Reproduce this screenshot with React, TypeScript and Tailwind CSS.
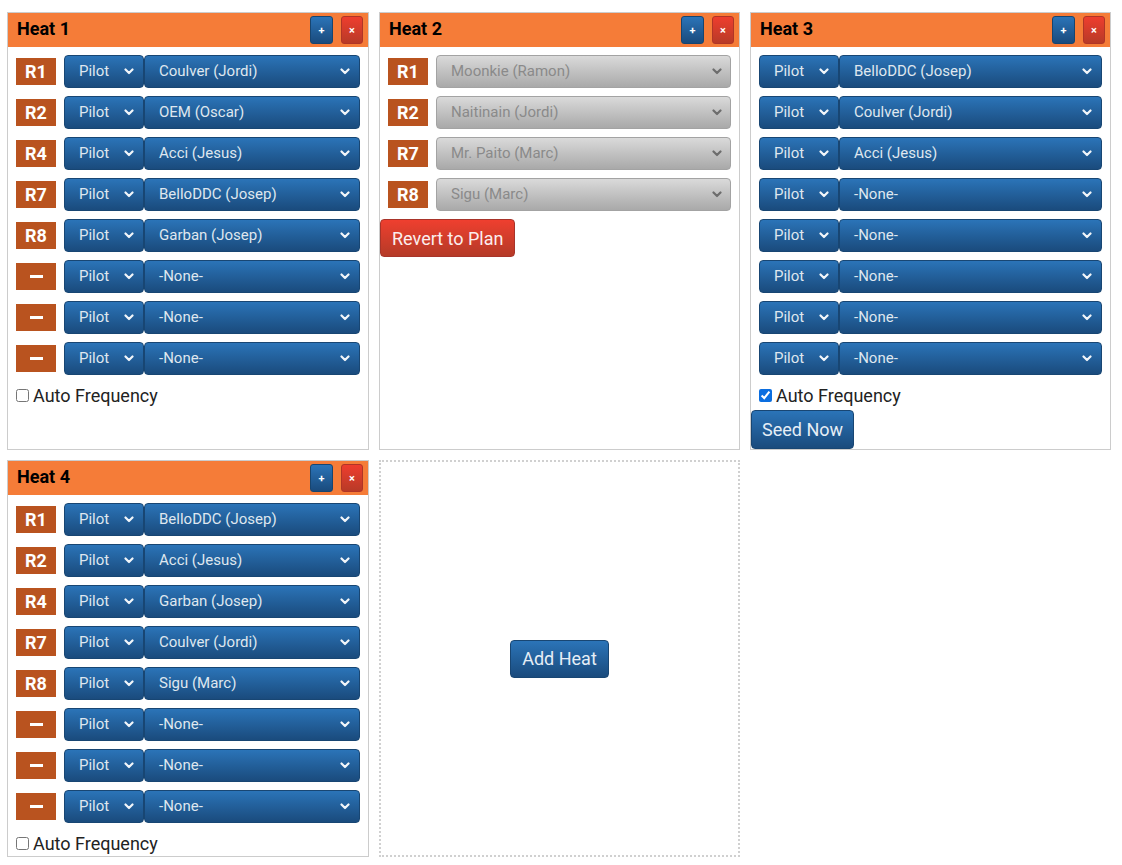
import React from "react";

type Slot = { badge?: string; pilot: string };

const heat1: Slot[] = [
  { badge: "R1", pilot: "Coulver (Jordi)" },
  { badge: "R2", pilot: "OEM (Oscar)" },
  { badge: "R4", pilot: "Acci (Jesus)" },
  { badge: "R7", pilot: "BelloDDC (Josep)" },
  { badge: "R8", pilot: "Garban (Josep)" },
  { badge: "", pilot: "-None-" },
  { badge: "", pilot: "-None-" },
  { badge: "", pilot: "-None-" },
];

const heat2: Slot[] = [
  { badge: "R1", pilot: "Moonkie (Ramon)" },
  { badge: "R2", pilot: "Naitinain (Jordi)" },
  { badge: "R7", pilot: "Mr. Paito (Marc)" },
  { badge: "R8", pilot: "Sigu (Marc)" },
];

const heat3: Slot[] = [
  { pilot: "BelloDDC (Josep)" },
  { pilot: "Coulver (Jordi)" },
  { pilot: "Acci (Jesus)" },
  { pilot: "-None-" },
  { pilot: "-None-" },
  { pilot: "-None-" },
  { pilot: "-None-" },
  { pilot: "-None-" },
];

const heat4: Slot[] = [
  { badge: "R1", pilot: "BelloDDC (Josep)" },
  { badge: "R2", pilot: "Acci (Jesus)" },
  { badge: "R4", pilot: "Garban (Josep)" },
  { badge: "R7", pilot: "Coulver (Jordi)" },
  { badge: "R8", pilot: "Sigu (Marc)" },
  { badge: "", pilot: "-None-" },
  { badge: "", pilot: "-None-" },
  { badge: "", pilot: "-None-" },
];

function Chevron({ color }: { color: string }) {
  return (
    <svg width="10" height="7" viewBox="0 0 10 7" className="shrink-0">
      <path d="M1.5 1.5 L5 5 L8.5 1.5" fill="none" stroke={color} strokeWidth="2.2" strokeLinecap="round" strokeLinejoin="round" />
    </svg>
  );
}

function BlueSelect({ label, className }: { label: string; className: string }) {
  return (
    <div
      className={`h-[33px] flex items-center justify-between pl-[14px] pr-[9px] rounded-[4px] border border-[#184673] bg-gradient-to-b from-[#2b74b8] to-[#1a4b7d] text-[#dfe7ef] text-[15px] ${className}`}
    >
      <span>{label}</span>
      <Chevron color="#f2f6fa" />
    </div>
  );
}

function GraySelect({ label }: { label: string }) {
  return (
    <div className="h-[33px] flex-1 flex items-center justify-between pl-[14px] pr-[8px] rounded-[4px] border border-[#a3a3a3] bg-gradient-to-b from-[#dadada] to-[#a9a9a9] text-[#8a8a8a] text-[15px]">
      <span>{label}</span>
      <Chevron color="#6d6d6d" />
    </div>
  );
}

function Badge({ text }: { text: string }) {
  return (
    <div className="w-[40px] h-[27px] shrink-0 bg-[#b9531f] text-white font-bold text-[18px] flex items-center justify-center">
      {text ? text : <span className="block w-[13px] h-[3px] bg-white" />}
    </div>
  );
}

function Header({ title }: { title: string }) {
  return (
    <div className="h-[34px] bg-[#f57c38] flex items-center justify-between pl-[9px] pr-[5px]">
      <span className="text-[18px] font-bold text-black leading-none -mt-[3px]">{title}</span>
      <div className="flex gap-[8px] items-center">
        <button className="w-[23px] h-[28px] rounded-[3px] border border-[#174570] bg-gradient-to-b from-[#2b74b8] to-[#1a4b7d] text-white text-[11px] font-bold flex items-center justify-center leading-none">
          +
        </button>
        <button className="w-[22px] h-[28px] rounded-[3px] border border-[#b03526] bg-gradient-to-b from-[#ee3d2e] to-[#b83a27] text-white text-[11px] font-bold flex items-center justify-center leading-none">
          ×
        </button>
      </div>
    </div>
  );
}

function AutoFreq({ checked }: { checked: boolean }) {
  return (
    <label className="flex items-center h-[26px] mt-[7px] px-[8px] text-[18px] text-[#222]">
      <input type="checkbox" defaultChecked={checked} className="w-[13px] h-[13px] m-0 mr-[4px] accent-[#0b6ee0]" />
      Auto Frequency
    </label>
  );
}

function EditHeat({ title, slots, checked, seed }: { title: string; slots: Slot[]; checked: boolean; seed?: boolean }) {
  return (
    <div className="border border-[#cccccc] bg-white">
      <Header title={title} />
      <div className="flex flex-col gap-[8px] pt-[8px] px-[8px]">
        {slots.map((s, i) => (
          <div key={i} className="flex items-center">
            {s.badge !== undefined && (
              <div className="mr-[8px]">
                <Badge text={s.badge} />
              </div>
            )}
            <BlueSelect label="Pilot" className="w-[80px] shrink-0" />
            <BlueSelect label={s.pilot} className="flex-1" />
          </div>
        ))}
      </div>
      <AutoFreq checked={checked} />
      {seed && (
        <button className="mt-[2px] h-[39px] px-[10px] rounded-[4px] border border-[#184673] bg-gradient-to-b from-[#2b74b8] to-[#1a4b7d] text-[#e6eef6] text-[18px]">
          Seed Now
        </button>
      )}
    </div>
  );
}

function PlannedHeat() {
  return (
    <div className="border border-[#cccccc] bg-white">
      <Header title="Heat 2" />
      <div className="flex flex-col gap-[8px] pt-[8px] px-[8px]">
        {heat2.map((s, i) => (
          <div key={i} className="flex items-center">
            <div className="mr-[8px]">
              <Badge text={s.badge ?? ""} />
            </div>
            <GraySelect label={s.pilot} />
          </div>
        ))}
      </div>
      <button className="mt-[8px] h-[38px] px-[11px] rounded-[4px] border border-[#a8342a] bg-gradient-to-b from-[#ef3f2f] to-[#b53a27] text-[#fbeeee] text-[18px]">
        Revert to Plan
      </button>
    </div>
  );
}

export default function App() {
  return (
    <div className="bg-white min-h-[865px] pl-[7px] pt-[12px]" style={{ fontFamily: "Roboto, 'Liberation Sans', sans-serif" }}>
      <div className="grid grid-cols-[362px_361px_361px] gap-x-[10px] gap-y-[10px]">
        <EditHeat title="Heat 1" slots={heat1} checked={false} />
        <PlannedHeat />
        <EditHeat title="Heat 3" slots={heat3} checked={true} seed />
        <EditHeat title="Heat 4" slots={heat4} checked={false} />
        <div className="border-2 border-dotted border-[#d0d0d0] flex items-center justify-center">
          <button className="h-[38px] px-[11px] rounded-[4px] border border-[#184673] bg-gradient-to-b from-[#2b74b8] to-[#1a4b7d] text-[#e6eef6] text-[18px]">
            Add Heat
          </button>
        </div>
      </div>
    </div>
  );
}
